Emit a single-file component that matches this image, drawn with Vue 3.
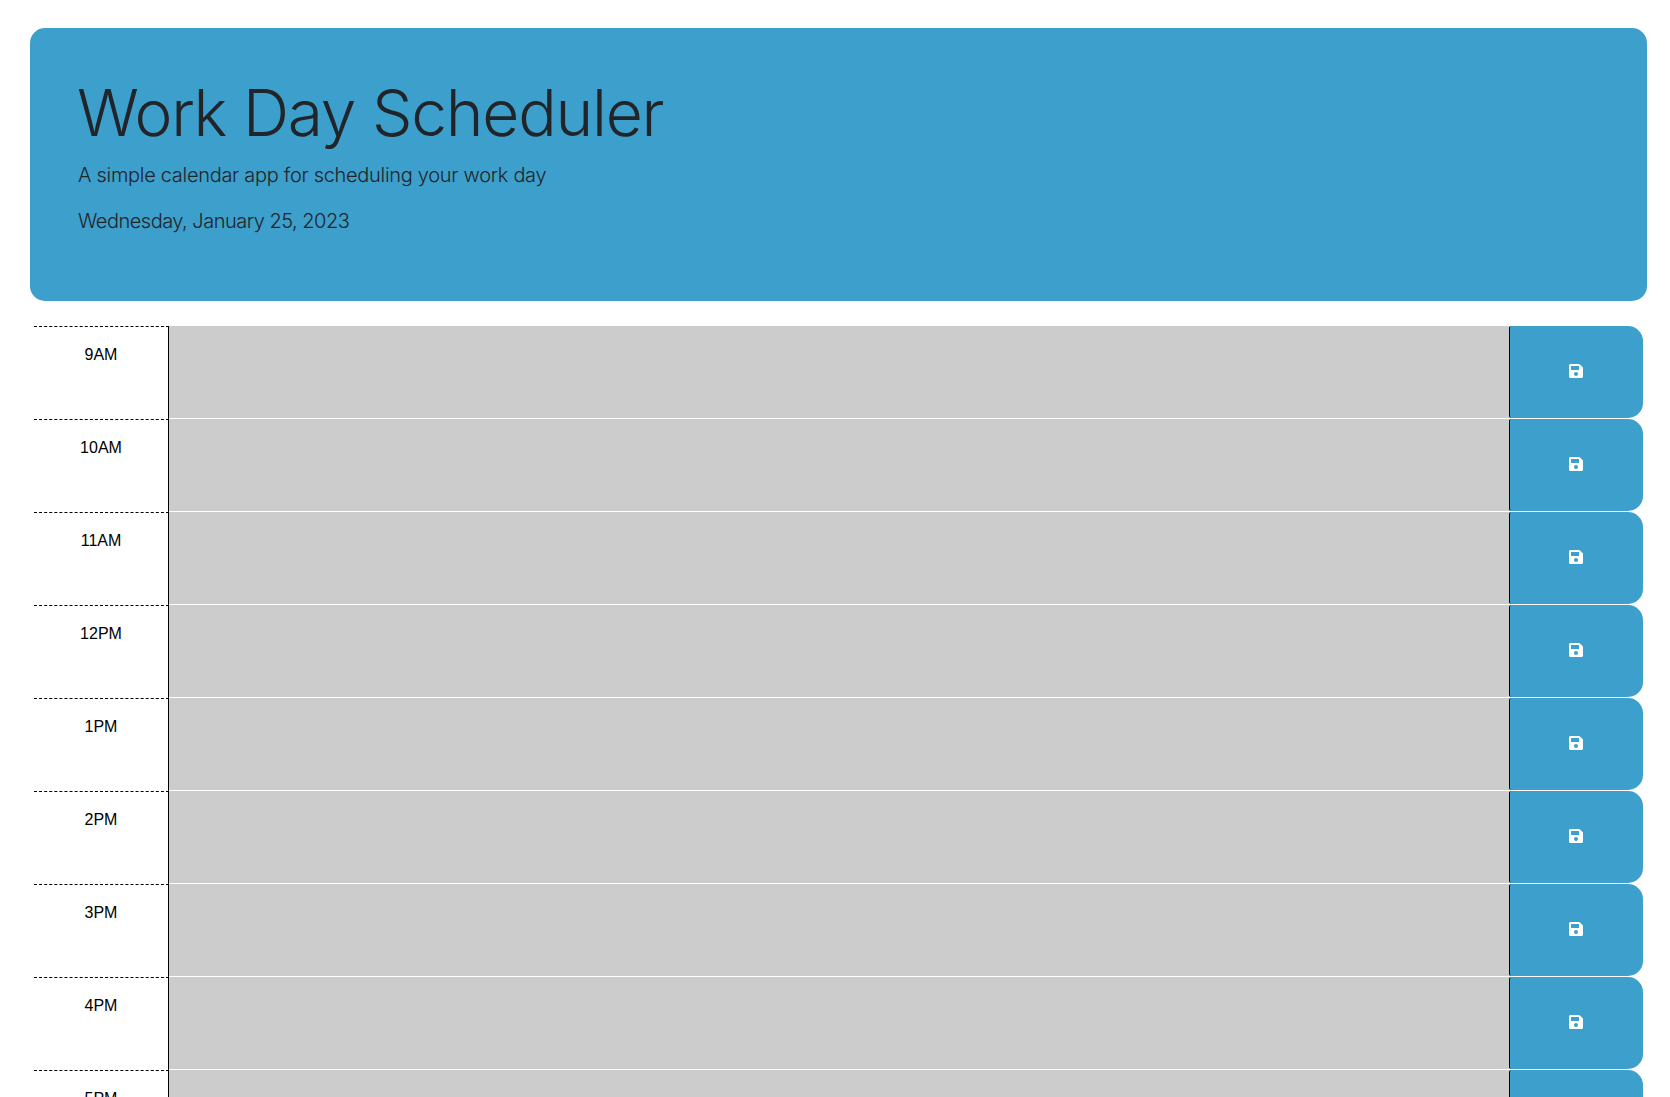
<script setup>
const hours = ['9AM', '10AM', '11AM', '12PM', '1PM', '2PM', '3PM', '4PM', '5PM']
</script>

<template>
  <div class="page">
    <header class="jumbotron">
      <h1 class="title">Work Day Scheduler</h1>
      <p class="lead">A simple calendar app for scheduling your work day</p>
      <p class="lead date">Wednesday, January 25, 2023</p>
    </header>

    <div class="schedule">
      <div v-for="hour in hours" :key="hour" class="row">
        <div class="hour">{{ hour }}</div>
        <textarea class="description" rows="3"></textarea>
        <button class="save-btn" aria-label="save">
          <svg class="save-icon" viewBox="0 0 448 512" width="14" height="16">
            <path fill="#fff" d="M433.941 129.941l-83.882-83.882A48 48 0 0 0 316.118 32H48C21.49 32 0 53.49 0 80v352c0 26.51 21.49 48 48 48h352c26.51 0 48-21.49 48-48V163.882a48 48 0 0 0-14.059-33.941zM224 416c-35.346 0-64-28.654-64-64 0-35.346 28.654-64 64-64s64 28.654 64 64c0 35.346-28.654 64-64 64zm96-304.52V212c0 6.627-5.373 12-12 12H76c-6.627 0-12-5.373-12-12V108c0-6.627 5.373-12 12-12h228.52c3.183 0 6.235 1.264 8.485 3.515l3.48 3.48A11.996 11.996 0 0 1 320 111.48z" />
          </svg>
        </button>
      </div>
    </div>
  </div>
</template>

<style>
html,
body {
  overflow: hidden;
  background: #fff;
}
</style>

<style scoped>
.page {
  padding: 28px 23px 0 30px;
  font-family: "Liberation Sans", Arial, sans-serif;
}

/* header block */
.jumbotron {
  height: 273px;
  box-sizing: border-box;
  padding: 46px 48px 0 47px;
  background-color: #3d9fcb;
  border-radius: 15px;
  color: #212529;
}
.title {
  margin: 0;
  font-family: Inter, "Liberation Sans", sans-serif;
  font-size: 64px;
  font-weight: 300;
  line-height: 77px;
  letter-spacing: -1.2px;
}
.lead {
  margin: 9px 0 0 1px;
  font-family: Inter, "Liberation Sans", sans-serif;
  font-size: 20px;
  font-weight: 300;
  line-height: 30px;
  letter-spacing: -0.3px;
}
.date {
  margin-top: 16px;
  letter-spacing: -0.5px;
}

/* rows */
.schedule {
  margin: 25px 4px 0;
}
.row {
  display: flex;
  height: 93px;
}
.hour {
  width: 135px;
  box-sizing: border-box;
  padding-top: 19px;
  border-top: 1px dashed #000;
  border-right: 1px solid #000;
  font-size: 16px;
  line-height: 18px;
  text-align: center;
  color: #000;
}
.description {
  flex: 1;
  height: 92px;
  box-sizing: border-box;
  padding: 0;
  border: none;
  outline: none;
  resize: none;
  background-color: #ccc;
}
.save-btn {
  display: flex;
  align-items: center;
  justify-content: center;
  width: 134px;
  height: 92px;
  box-sizing: border-box;
  padding: 0 1px 2px 0;
  border: none;
  border-left: 1px solid #000;
  border-radius: 2px 15px 15px 2px;
  background-color: #3d9fcb;
}
</style>
